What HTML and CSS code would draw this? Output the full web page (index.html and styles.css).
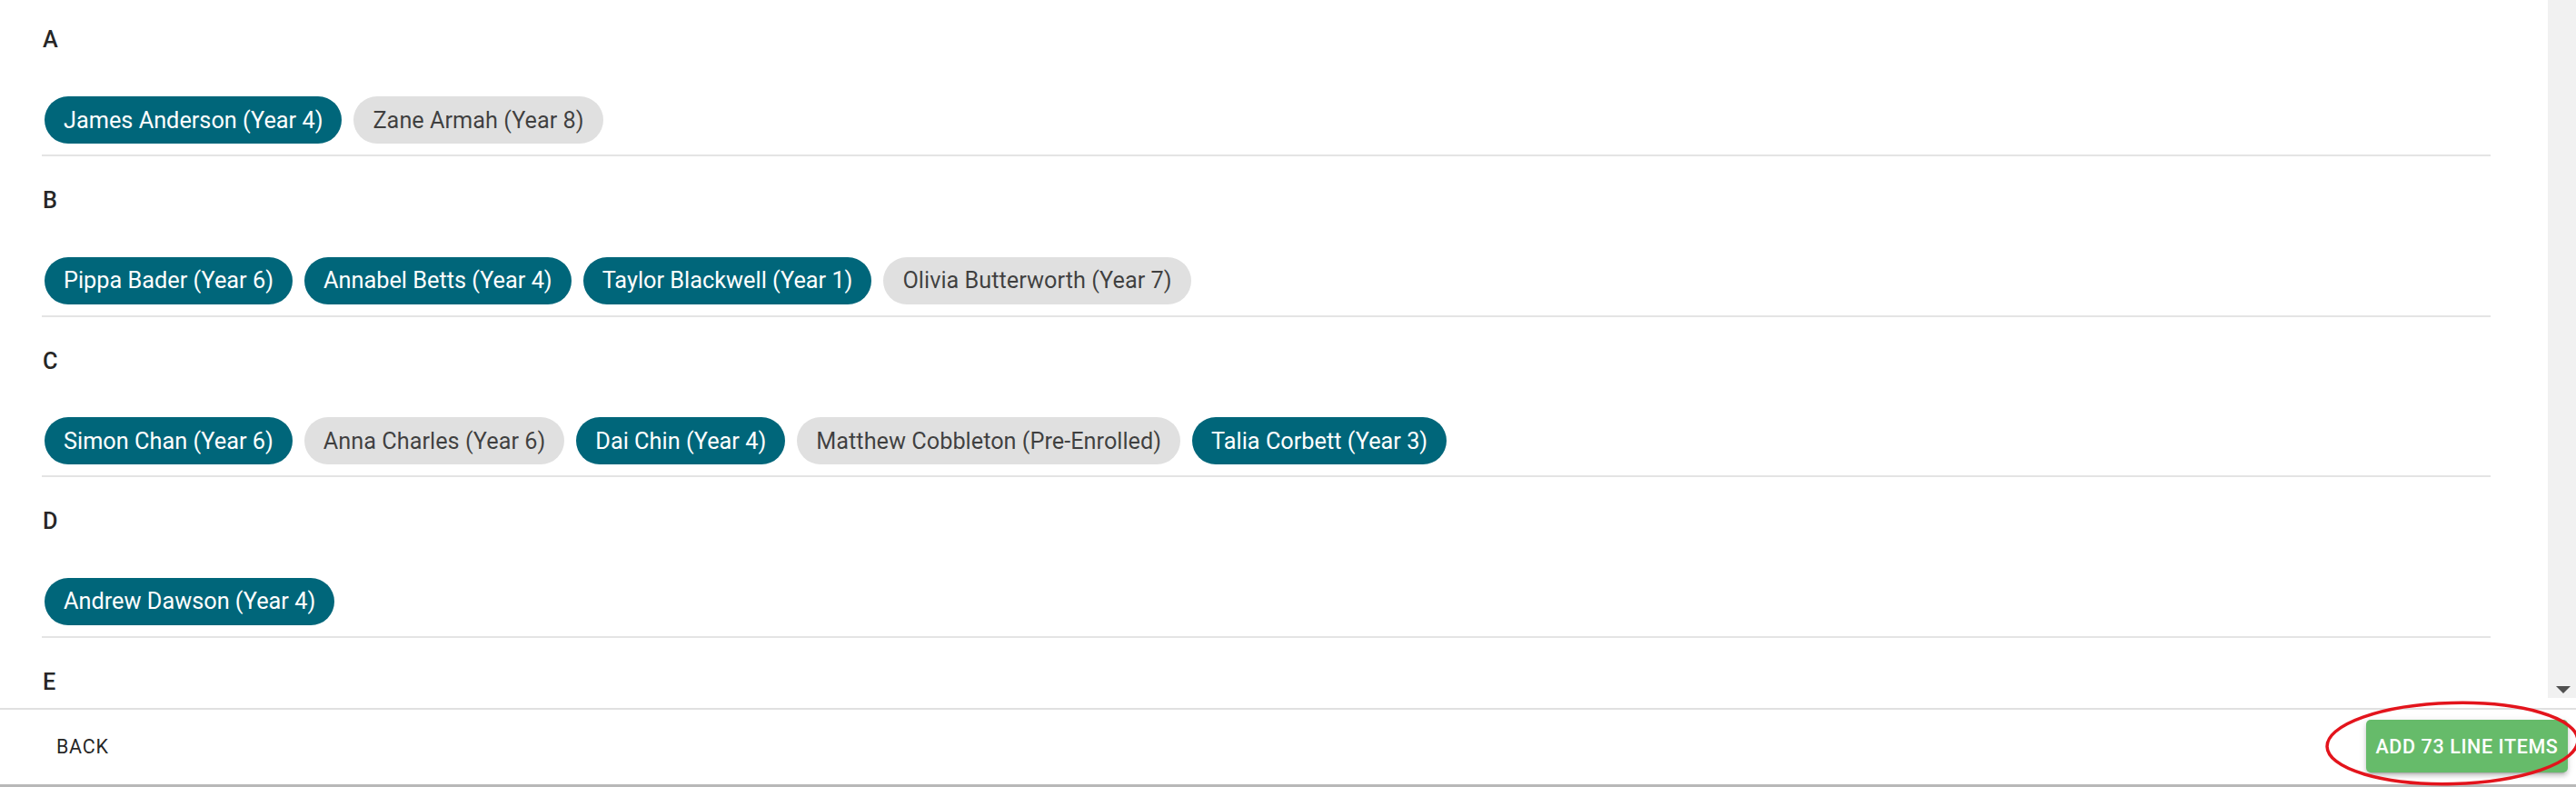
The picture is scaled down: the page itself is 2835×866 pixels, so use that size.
FILE: index.html
```html
<!DOCTYPE html>
<html lang="en">
<head>
<meta charset="utf-8">
<title>Students</title>
<link rel="stylesheet" href="styles.css">
</head>
<body>
<div class="page">
  <div class="viewport">
    <div class="list">
      <div class="sections">
        <section class="section">
          <div class="letter">A</div>
          <div class="chips">
            <span class="chip chip-on">James Anderson (Year 4)</span>
            <span class="chip chip-off">Zane Armah (Year 8)</span>
          </div>
        </section>
        <section class="section">
          <div class="letter">B</div>
          <div class="chips">
            <span class="chip chip-on">Pippa Bader (Year 6)</span>
            <span class="chip chip-on">Annabel Betts (Year 4)</span>
            <span class="chip chip-on">Taylor Blackwell (Year 1)</span>
            <span class="chip chip-off">Olivia Butterworth (Year 7)</span>
          </div>
        </section>
        <section class="section">
          <div class="letter">C</div>
          <div class="chips">
            <span class="chip chip-on">Simon Chan (Year 6)</span>
            <span class="chip chip-off">Anna Charles (Year 6)</span>
            <span class="chip chip-on">Dai Chin (Year 4)</span>
            <span class="chip chip-off">Matthew Cobbleton (Pre-Enrolled)</span>
            <span class="chip chip-on">Talia Corbett (Year 3)</span>
          </div>
        </section>
        <section class="section">
          <div class="letter">D</div>
          <div class="chips">
            <span class="chip chip-on">Andrew Dawson (Year 4)</span>
          </div>
        </section>
        <section class="section">
          <div class="letter">E</div>
        </section>
      </div>
    </div>
    <div class="scrollbar"><span class="arrow-down"></span></div>
  </div>
  <div class="gap"></div>
  <footer class="footer">
    <button class="btn-back" type="button">BACK</button>
    <button class="btn-add" type="button">ADD 73 LINE ITEMS</button>
  </footer>
</div>
<svg class="annotation" width="290" height="100" viewBox="0 0 290 100" aria-hidden="true">
  <ellipse cx="140" cy="47" rx="138" ry="44.5" fill="none" stroke="#e3141c" stroke-width="3.5" transform="rotate(-1.5 140 47)"/>
</svg>
</body>
</html>
```

FILE: styles.css
```css
html, body {
  margin: 0;
  padding: 0;
}

body {
  width: 2835px;
  height: 866px;
  overflow: hidden;
  background: #ffffff;
  font-family: Roboto, "Noto Sans", "Liberation Sans", sans-serif;
  position: relative;
}

.page {
  display: flex;
  flex-direction: column;
  height: 866px;
}

.viewport {
  display: flex;
  height: 768px;
  flex: none;
}

.list {
  flex: 1;
  overflow: hidden;
  padding: 0 63px 0 46px;
}

.sections {
  margin-top: -4.67px;
}

.section {
  border-bottom: 2px solid #e4e4e4;
  height: 176.67px;
  box-sizing: border-box;
}

.letter {
  height: 98.67px;
  line-height: 98.67px;
  font-size: 25.3px;
  font-weight: 500;
  color: rgba(0, 0, 0, 0.87);
  padding-left: 1px;
}

.chips {
  display: flex;
  gap: 13px;
  margin-top: 12px;
  padding-left: 3px;
}

.chip {
  display: inline-flex;
  align-items: center;
  height: 52px;
  padding: 0 21px;
  border-radius: 26px;
  font-size: 25.3px;
  white-space: nowrap;
  box-sizing: border-box;
}

.chip-on {
  background: #00667a;
  color: #ffffff;
}

.chip-off {
  background: #e0e0e0;
  color: rgba(0, 0, 0, 0.72);
}

.scrollbar {
  width: 31px;
  flex: none;
  background: #f1f1f1;
  display: flex;
  flex-direction: column;
  justify-content: flex-end;
  align-items: center;
  padding-left: 3px;
  padding-bottom: 5px;
  box-sizing: border-box;
}

.arrow-down {
  width: 0;
  height: 0;
  border-left: 8px solid transparent;
  border-right: 8px solid transparent;
  border-top: 8px solid #505050;
}

.gap {
  height: 11px;
  flex: none;
}

.footer {
  flex: none;
  height: 87px;
  box-sizing: border-box;
  border-top: 2px solid #e0e0e0;
  border-bottom: 3px solid #b8b8b8;
  display: flex;
  align-items: center;
  justify-content: space-between;
  padding: 0 9px 2px 48px;
}

.btn-back {
  border: none;
  background: transparent;
  font-family: inherit;
  font-size: 21.5px;
  font-weight: 400;
  letter-spacing: 0.7px;
  color: rgba(0, 0, 0, 0.87);
  padding: 0 14px;
  height: 58px;
}

.btn-add {
  border: none;
  background: #66bb6a;
  color: #ffffff;
  font-family: inherit;
  font-size: 21.5px;
  font-weight: 500;
  letter-spacing: 0.6px;
  width: 222px;
  height: 58px;
  padding: 0;
  border-radius: 5px;
  box-shadow: 0 5px 2px -4px rgba(0, 0, 0, 0.2), 0 4px 4px 0 rgba(0, 0, 0, 0.14), 0 2px 9px 0 rgba(0, 0, 0, 0.12);
}

.annotation {
  position: absolute;
  left: 2559px;
  top: 771px;
  overflow: visible;
}
```
